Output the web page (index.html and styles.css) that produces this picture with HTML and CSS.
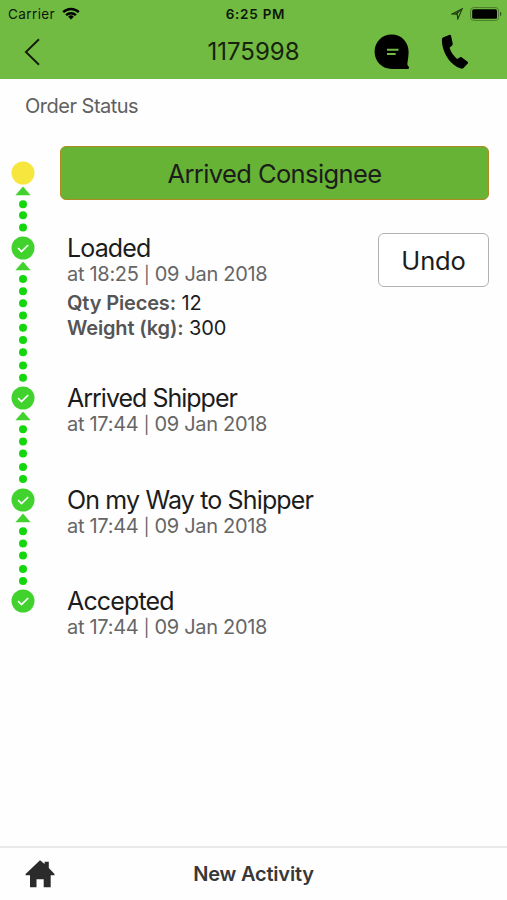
FILE: index.html
```html
<!DOCTYPE html>
<html lang="en">
<head>
<meta charset="utf-8">
<title>Order Status</title>
<link rel="stylesheet" href="styles.css">
</head>
<body>
<svg width="0" height="0" class="defs" aria-hidden="true">
  <symbol id="done" viewBox="0 0 24 24">
    <circle cx="12" cy="12" r="11.5" fill="#41d22e"/>
    <path d="M7.1 12.2l3.4 3.3 6.7-6.5" fill="none" stroke="#fff" stroke-width="1.7"/>
  </symbol>
  <symbol id="arrow" viewBox="0 0 16 9">
    <path d="M8 0l7.8 9H.2z" fill="#41d22e"/>
  </symbol>
</svg>
<header class="header">
  <div class="status">
    <div class="carrier"><span>Carrier</span>
      <svg width="18" height="13" viewBox="0 0 18 13"><g fill="none" stroke="#000" stroke-width="2.4"><path d="M1.2 5.2a11 11 0 0 1 15.6 0"/><path d="M4.1 8.2a7 7 0 0 1 9.8 0"/></g><path d="M9 12.6L6.1 9.7a4.1 4.1 0 0 1 5.8 0z"/></svg>
    </div>
    <time class="clock">6:25 PM</time>
    <div class="power">
      <svg width="12" height="12" viewBox="0 0 12 12"><path d="M1 6L11.200.8 6.800 11 6.200 6.300z" fill="none" stroke="#1f3610" stroke-width="1.1"/><path d="M11.200.8L6.200 6.300 3.500 6z" fill="#1f3610"/></svg>
      <svg width="32" height="14" viewBox="0 0 32 14"><rect x=".6" y=".6" width="28" height="12.800" rx="3" fill="none" stroke="#4a7a2b" stroke-width="1"/><rect x="2.200" y="2.300" width="24.800" height="9.400" rx="1.500"/><path d="M30 4.800q1.500.7 1.500 2.200T30 9.200z" fill="#36581f"/></svg>
    </div>
  </div>
  <nav class="nav">
    <svg class="back" width="16" height="28" viewBox="0 0 16 28"><path d="M15 1.200L1.900 14 15 26.800" fill="none" stroke="#111b09" stroke-width="1.900"/></svg>
    <h1 class="number">1175998</h1>
    <div class="tools">
      <svg width="36" height="36" viewBox="0 0 36 36"><path d="M17.600.6C8 .6.6 8 .6 17.800S8 35 18 35h15.600c1.500 0 2-1.500 1-2.500-1-.8-1.400-1.800-1.200-3.200.2-2.500 1.200-6 1.200-11.500C34.600 8 27.200.6 17.600.6z"/><path d="M13 15.700h11.500M13 20h8.700" stroke="#72bb43" stroke-width="1.900"/></svg>
      <svg width="28" height="36" viewBox="0 0 28 36"><path d="M2.400 3.200L8.200.9c.8-.3 1.500 0 1.800.7l1.700 8c.2.800 0 1.300-.6 1.800l-2.600 2.400c1.500 4.600 4.200 8.200 7.600 11.200l2.900-1.800c.7-.4 1.300-.3 1.900.2l5.700 4.300c.6.500.6 1.200.2 1.800l-4.300 4.500c-.7.700-1.500.8-2.500.5C9.500 31.400 1 18.700.9 6c0-1.300.3-2.200 1.500-2.800z"/></svg>
    </div>
  </nav>
</header>
<main class="main">
  <h2 class="caption">Order Status</h2>
  <ol class="steps">
    <li class="step step-next">
      <svg class="rail" width="24" height="75" viewBox="0 0 24 75"><circle cx="12" cy="12" r="11.500" fill="#f7e63d"/><use href="#arrow" x="4" y="25.500" width="16" height="9"/><g fill="#14d60c"><circle cx="12" cy="43.300" r="4"/><circle cx="12" cy="54.300" r="4"/><circle cx="12" cy="66.500" r="4"/></g></svg>
      <button class="advance">Arrived Consignee</button>
    </li>
    <li class="step step-loaded">
      <svg class="rail" width="24" height="150" viewBox="0 0 24 150"><use href="#done" width="24" height="24"/><use href="#arrow" x="4" y="25.500" width="16" height="9"/><g fill="#14d60c"><circle cx="12" cy="43" r="4"/><circle cx="12" cy="55.200" r="4"/><circle cx="12" cy="67.300" r="4"/><circle cx="12" cy="79.500" r="4"/><circle cx="12" cy="91.700" r="4"/><circle cx="12" cy="104" r="4"/><circle cx="12" cy="116.200" r="4"/><circle cx="12" cy="129.500" r="4"/><circle cx="12" cy="141.800" r="4"/></g></svg>
      <div class="info">
        <h3 class="name">Loaded</h3>
        <p class="when">at 18:25 <span class="bar">|</span> 09 Jan 2018</p>
        <p class="fact fact-first"><b>Qty Pieces:</b> 12</p>
        <p class="fact"><b>Weight (kg):</b> 300</p>
      </div>
      <button class="undo">Undo</button>
    </li>
    <li class="step step-short">
      <svg class="rail" width="24" height="101" viewBox="0 0 24 101"><use href="#done" width="24" height="24"/><use href="#arrow" x="4" y="25.500" width="16" height="9"/><g fill="#14d60c"><circle cx="12" cy="43.200" r="4"/><circle cx="12" cy="55.400" r="4"/><circle cx="12" cy="67.500" r="4"/><circle cx="12" cy="81" r="4"/><circle cx="12" cy="93" r="4"/></g></svg>
      <div class="info"><h3 class="name name-shipper">Arrived Shipper</h3><p class="when">at 17:44 <span class="bar">|</span> 09 Jan 2018</p></div>
    </li>
    <li class="step step-short">
      <svg class="rail" width="24" height="101" viewBox="0 0 24 101"><use href="#done" width="24" height="24"/><use href="#arrow" x="4" y="25.500" width="16" height="9"/><g fill="#14d60c"><circle cx="12" cy="43.200" r="4"/><circle cx="12" cy="55.400" r="4"/><circle cx="12" cy="67.500" r="4"/><circle cx="12" cy="81" r="4"/><circle cx="12" cy="93" r="4"/></g></svg>
      <div class="info"><h3 class="name">On my Way to Shipper</h3><p class="when">at 17:44 <span class="bar">|</span> 09 Jan 2018</p></div>
    </li>
    <li class="step step-short">
      <svg class="rail" width="24" height="24" viewBox="0 0 24 24"><use href="#done" width="24" height="24"/></svg>
      <div class="info"><h3 class="name">Accepted</h3><p class="when">at 17:44 <span class="bar">|</span> 09 Jan 2018</p></div>
    </li>
  </ol>
</main>
<footer class="footer">
  <svg width="30" height="28" viewBox="0 0 30 28" fill="#2b2b2b"><path d="M15 .3l4.600 3.800V1.800h4.200v6.200L29.500 14v1.300h-3.800V27.300h-7v-8h-7.200v8H5V15.300H.6V14z"/></svg>
  <span class="new">New Activity</span>
</footer>
</body>
</html>
```

FILE: styles.css
```css
* { box-sizing: border-box; }
body {
  margin: 0;
  height: 900px;
  display: flex;
  flex-direction: column;
  overflow: hidden;
  background: #fefefe;
  color: #1c1c1c;
  font-family: Inter, "Liberation Sans", sans-serif;
}
.defs { position: absolute; }
svg { display: block; flex: none; }
h1, h2, h3, p, ol { margin: 0; padding: 0; font-weight: 400; }
button { padding: 0; font: inherit; color: inherit; }

.header { height: 79px; background: #72bb43; flex: none; }
.status {
  display: grid;
  grid-template-columns: 1fr auto 1fr;
  align-items: center;
  height: 27px;
  padding: 0 5px 0 8px;
  font-size: 13.5px;
  color: #0d1706;
}
.carrier { display: flex; align-items: center; gap: 7px; letter-spacing: .4px; }
.clock { margin-left: 1px; font-weight: 600; letter-spacing: .75px; }
.power { display: flex; justify-content: flex-end; align-items: center; gap: 7px; }
.nav {
  display: grid;
  grid-template-columns: minmax(0, 1fr) auto minmax(0, 1fr);
  align-items: center;
  height: 50px;
  padding: 0 38px 0 24px;
}
.number { margin-left: 14px; font-size: 24px; line-height: 30px; color: #16230d; }
.tools { display: flex; justify-content: flex-end; gap: 31px; }

.main { flex: 1; }
.caption { margin: 14px 0 0 25px; font-size: 20px; line-height: 26px; letter-spacing: -.5px; color: #606060; }
.steps { margin-top: 28px; padding: 0 18px 0 11px; list-style: none; }
.step { display: flex; align-items: flex-start; }
.step-next { height: 89px; padding-top: 14px; }
.advance {
  flex: 1;
  height: 54px;
  margin: -15px 0 0 25px;
  border: 1px solid #b08a20;
  border-radius: 6px;
  background: #66b335;
  font-size: 25.5px;
  letter-spacing: -.6px;
}
.step-loaded { height: 150.4px; }
.step-short { height: 101.3px; }
.info { flex: 1; margin-left: 32px; }
.name { font-size: 25px; line-height: 28px; letter-spacing: -.85px; margin-top: -2px; white-space: nowrap; }
.name-shipper { letter-spacing: -1px; }
.when { font-size: 20px; line-height: 24px; letter-spacing: -.3px; color: #666; }
.bar { font-size: 17px; }
.fact { font-size: 20px; line-height: 25px; letter-spacing: -.15px; }
.fact-first { margin-top: 4px; }
.fact b { font-weight: 600; color: #555; }
.undo {
  width: 111px;
  height: 54px;
  margin-top: -3px;
  border: 1px solid #b2b2b2;
  border-radius: 6px;
  background: #fff;
  font-size: 25.5px;
  letter-spacing: -.15px;
}

.footer {
  display: grid;
  grid-template-columns: 1fr auto 1fr;
  align-items: center;
  height: 54px;
  padding: 0 25px;
  border-top: 2px solid #e9e9e9;
}
.new { font-size: 20px; font-weight: 600; letter-spacing: -.2px; color: #383838; }
```
